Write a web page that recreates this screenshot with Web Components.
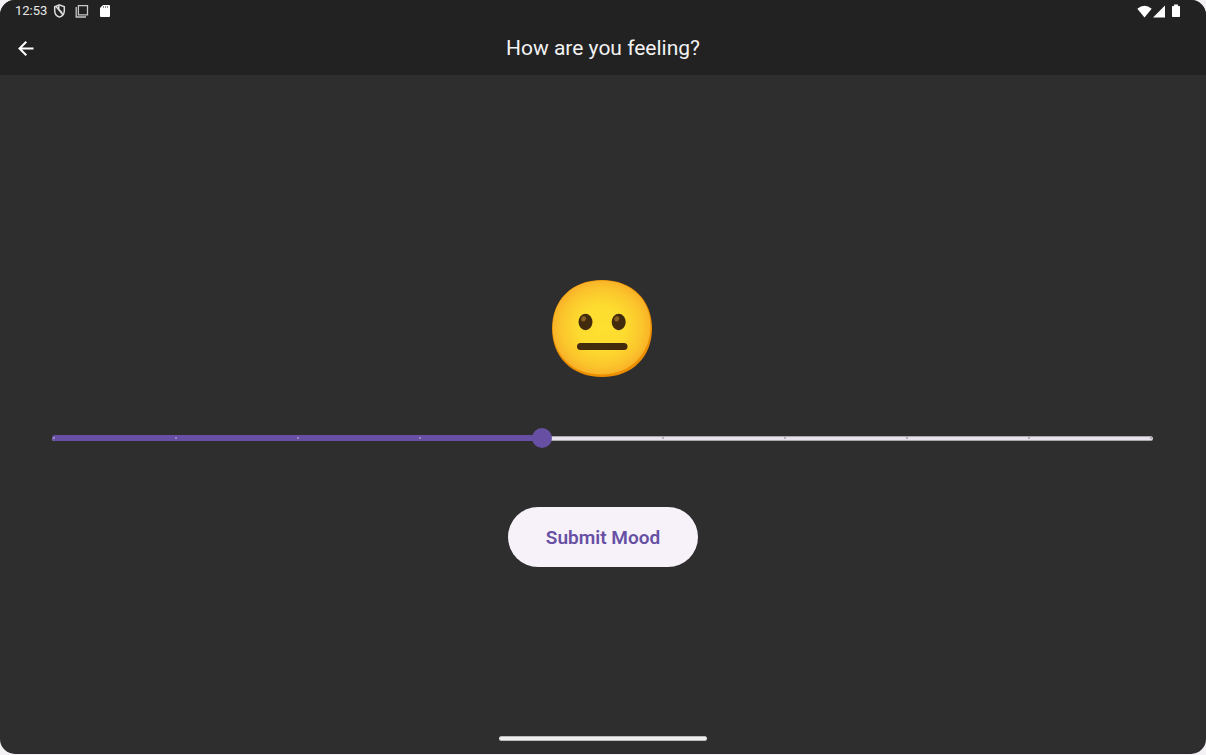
<!DOCTYPE html>
<html lang="en">
<head>
<meta charset="utf-8">
<meta name="viewport" content="width=device-width, initial-scale=1">
<title>How are you feeling?</title>
<style>
  html { background: #f4f2f4; }
  body { margin: 0; font-family: Roboto, "Liberation Sans", sans-serif; color: #fff; }
</style>
</head>
<body>
<mood-screen>
  <status-bar slot="top" time="12:53"></status-bar>
  <app-bar slot="top">How are you feeling?</app-bar>
  <mood-face></mood-face>
  <mood-slider min="1" max="10" value="5"></mood-slider>
  <mood-button>Submit Mood</mood-button>
</mood-screen>
<script>
class BaseElement extends HTMLElement {
  render(html) { this.attachShadow({ mode: "open" }).innerHTML = html; }
}

customElements.define("mood-screen", class extends BaseElement {
  connectedCallback() {
    this.render(`
      <style>
        :host { display: flex; flex-direction: column; min-height: calc(100vh - 1px); background: #2e2e2e; border-radius: 15px; overflow: hidden; }
        header { background: #222; height: 75px; }
        main { flex: 1; display: flex; flex-direction: column; align-items: center; justify-content: center; padding-top: 32px; }
        footer { display: flex; justify-content: center; align-items: center; height: 32px; }
        .handle { width: 208px; height: 5px; border-radius: 3px; background: #eee; border-block: 1px solid #bbb; box-sizing: border-box; }
      </style>
      <header><slot name="top"></slot></header>
      <main><slot></slot></main>
      <footer><div class="handle"></div></footer>`);
  }
});

customElements.define("status-bar", class extends BaseElement {
  connectedCallback() {
    this.render(`
      <style>
        :host { display: flex; justify-content: space-between; align-items: center; height: 22px; padding: 0 25px 0 15px; font-size: 13px; line-height: 22px; color: #e8e8e8; }
        div { display: flex; align-items: center; }
        svg { display: block; }
        .left { gap: 9px; }
        .time { margin-right: -3px; }
        .right { gap: 1px; }
      </style>
      <div class="left">
        <span class="time">${this.getAttribute("time")}</span>
        <svg width="13" height="14" viewBox="0 0 13 14" fill="none" stroke="#dcdcdc" stroke-width="1.5"><path d="M6.500 .9 11.300 2.700V6.800C11.300 9.900 9.300 12.200 6.500 13.100 3.700 12.200 1.700 9.900 1.700 6.800V2.700Z"/><path d="M3 2.600 10.200 11M5.800 1.400V5.400L9.200 8.800"/></svg>
        <svg width="14" height="14" viewBox="0 0 14 14" fill="none" stroke="#c8c8c8"><path stroke-width="1.300" d="M3.400 1.700H12.500V10.800H3.400Z"/><path stroke-width="1.300" d="M1.200 3V13H11"/></svg>
        <svg width="14" height="14" viewBox="0 0 14 14"><path fill="#fff" d="M5 1H11Q12 1 12 2V12Q12 13 11 13H3Q2 13 2 12V4Z"/><path stroke="#888" stroke-width="1" d="M5.500 2V4M7.500 2V4M9.500 2V4"/></svg>
      </div>
      <div class="right">
        <svg width="15" height="13" viewBox="0 0 15 13"><path fill="#fff" d="M.3 3.700Q7.500-2.300 14.700 3.700L7.500 12.500Z"/></svg>
        <svg width="13" height="13" viewBox="0 0 13 13"><path fill="#fff" d="M12 .5V12.500H0Z"/></svg>
        <svg width="14" height="14" viewBox="1 0 14 14"><path fill="#fff" d="M8 .6H12V2H13.300Q14 2 14 2.700V12.300Q14 13 13.300 13H6.700Q6 13 6 12.300V2.700Q6 2 6.700 2H8Z"/></svg>
      </div>`);
  }
});

customElements.define("app-bar", class extends BaseElement {
  connectedCallback() {
    this.render(`
      <style>
        :host { display: grid; grid-template-columns: 52px 1fr 52px; align-items: center; height: 52px; }
        button { width: 52px; height: 52px; padding: 0; border: 0; background: none; color: #fff; display: grid; place-items: center; cursor: pointer; }
        h1 { margin: 0; text-align: center; font-size: 21px; line-height: 28px; font-weight: 400; color: #f2f2f2; }
      </style>
      <button type="button" aria-label="Back">
        <svg width="16" height="16" viewBox="0 0 16 16" fill="none" stroke="currentColor" stroke-width="2"><path d="M15.500 8.500H2M8.300 1.700 1.500 8.500 8.300 15.300"/></svg>
      </button>
      <h1><slot></slot></h1>`);
  }
});

customElements.define("mood-face", class extends BaseElement {
  connectedCallback() {
    this.render(`
      <style>
        :host { display: block; padding: 18px 0 36px; }
        svg { display: block; }
      </style>
      <svg width="102" height="98" viewBox="1 0 102 98" role="img" aria-label="Neutral face">
        <defs>
          <radialGradient id="skin" cx=".5" cy=".5" r=".52"><stop offset="0" stop-color="#fde030"/><stop offset=".45" stop-color="#fddc2f"/><stop offset=".8" stop-color="#fbc52c"/><stop offset="1" stop-color="#f8af27"/></radialGradient>
        </defs>
        <path fill="#eb8f00" d="M51 0C82 0 101 21 101 48.500S82 97 51 97 1 76 1 48.500 20 0 51 0Z"/>
        <path fill="url(#skin)" d="M51 .5C80 .5 99.500 20 99.500 46.500S80 94.500 50.500 94.500 1.700 75 1.700 47.500 21 .5 51 .5Z"/>
        <g fill="#422b0d"><ellipse cx="34.500" cy="42" rx="7" ry="8.200"/><ellipse cx="67.700" cy="42" rx="7" ry="8.200"/><rect x="26" y="63" width="50.500" height="7" rx="3.500"/></g>
        <g fill="#896024"><ellipse cx="32.600" cy="38.800" rx="2.300" ry="2.700" transform="rotate(30 32.600 38.800)"/><ellipse cx="65.800" cy="38.800" rx="2.300" ry="2.700" transform="rotate(30 65.800 38.800)"/></g>
      </svg>`);
  }
});

customElements.define("mood-slider", class extends BaseElement {
  connectedCallback() {
    const min = +this.getAttribute("min"), max = +this.getAttribute("max"), value = +this.getAttribute("value");
    const ticks = Array.from({ length: max - min + 1 }, () => "<i></i>").join("");
    this.render(`
      <style>
        :host { display: block; align-self: stretch; margin: 0 45px 45px 44px; }
        .slider { display: grid; align-items: center; height: 48px; }
        .slider > * { grid-area: 1 / 1; }
        .track { margin: 0 8px; height: 5px; border-radius: 3px; background: #e8e0ea; border-block: 1px solid #aaa7ab; box-sizing: border-box; }
        .active { margin-left: 8px; width: calc((100% - 20px) * var(--ratio) + 2px); height: 6px; border-radius: 3px; background: #674fa3; }
        .ticks { display: flex; justify-content: space-between; margin: 0 9px; }
        i { width: 2px; height: 2px; border-radius: 1px; background: #a9a1b5; }
        i.on { background: #a799c9; }
        input { appearance: none; width: 100%; height: 20px; margin: 0; background: none; cursor: pointer; }
        input::-webkit-slider-thumb { appearance: none; width: 20px; height: 20px; border-radius: 50%; background: #6750a4; }
        input::-moz-range-thumb { width: 20px; height: 20px; border: 0; border-radius: 50%; background: #6750a4; }
      </style>
      <div class="slider">
        <div class="track"></div><div class="active"></div><div class="ticks">${ticks}</div>
        <input type="range" aria-label="Mood" min="${min}" max="${max}" value="${value}">
      </div>`);
    const root = this.shadowRoot, box = root.querySelector(".slider"), input = root.querySelector("input");
    const update = () => {
      box.style.setProperty("--ratio", (input.value - min) / (max - min));
      root.querySelectorAll("i").forEach((tick, i) => tick.classList.toggle("on", min + i <= +input.value));
    };
    input.addEventListener("input", update);
    update();
  }
});

customElements.define("mood-button", class extends BaseElement {
  connectedCallback() {
    this.render(`
      <style>
        :host { display: block; }
        button { height: 60px; padding: 2px 38px 0; border: 0; border-radius: 30px; background: #f7f2fa; color: #6750a4; font: 600 19px/24px Roboto, "Liberation Sans", sans-serif; cursor: pointer; display: block; }
      </style>
      <button type="button"><slot></slot></button>`);
  }
});
</script>
</body>
</html>
